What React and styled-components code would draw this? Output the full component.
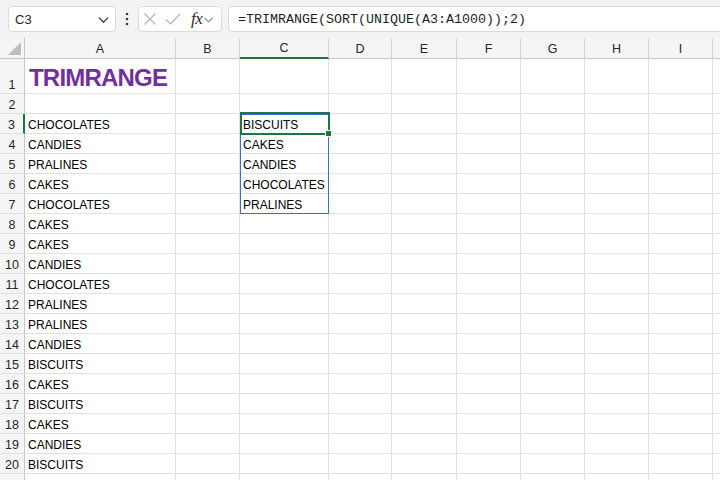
import React from "react";
import styled, { createGlobalStyle, css } from "styled-components";

const COLS = [
  { key: "A", width: 151 },
  { key: "B", width: 64 },
  { key: "C", width: 89 },
  { key: "D", width: 63 },
  { key: "E", width: 65 },
  { key: "F", width: 64 },
  { key: "G", width: 64 },
  { key: "H", width: 64 },
  { key: "I", width: 64 },
  { key: "", width: 64 },
];

const COL_A = [
  "CHOCOLATES",
  "CANDIES",
  "PRALINES",
  "CAKES",
  "CHOCOLATES",
  "CAKES",
  "CAKES",
  "CANDIES",
  "CHOCOLATES",
  "PRALINES",
  "PRALINES",
  "CANDIES",
  "BISCUITS",
  "CAKES",
  "BISCUITS",
  "CAKES",
  "CANDIES",
  "BISCUITS",
];

const COL_C = ["BISCUITS", "CAKES", "CANDIES", "CHOCOLATES", "PRALINES"];

// row 21 only peeks in at the bottom edge
const ROW_COUNT = 21;

const cellValue = (row, col) => {
  if (col === "A" && row >= 3 && row <= 20) return COL_A[row - 3];
  if (col === "C" && row >= 3 && row <= 7) return COL_C[row - 3];
  return "";
};

const GlobalStyle = createGlobalStyle`
  html, body {
    margin: 0;
    padding: 0;
    background: #ffffff;
  }
  body {
    font-family: "Liberation Sans", Arial, sans-serif;
  }
`;

const Page = styled.div`
  width: 720px;
  height: 480px;
  overflow: hidden;
  display: flex;
  flex-direction: column;
  background: #ffffff;
`;

const FormulaBar = styled.div`
  height: 38px;
  flex: none;
  display: flex;
  align-items: flex-start;
  padding: 6px 0 0 8px;
  box-sizing: border-box;
  background: #f3f3f3;
`;

const BarBox = styled.div`
  height: 26px;
  box-sizing: border-box;
  background: #ffffff;
  border: 1px solid #dadada;
  border-radius: 4px;
  display: flex;
  align-items: center;
`;

const NameBox = styled(BarBox)`
  width: 108px;
  justify-content: space-between;
  padding: 0 5px 0 6px;
  font-size: 13px;
  color: #1f1f1f;
`;

const Kebab = styled.div`
  width: 22px;
  height: 26px;
  display: flex;
  align-items: center;
  justify-content: center;
`;

const FxGroup = styled(BarBox)`
  width: 84px;
  padding: 0 3px 0 4px;
  gap: 8px;
`;

const FxWrap = styled.span`
  display: flex;
  align-items: center;
  gap: 1px;
`;

const FxLabel = styled.span`
  font-family: "Liberation Serif", "Times New Roman", serif;
  font-style: italic;
  font-size: 17px;
  color: #2b2b2b;
  margin-left: 2px;
  letter-spacing: -0.5px;
`;

const FormulaInput = styled(BarBox)`
  flex: 1;
  margin-left: 6px;
  margin-right: -12px;
  padding-left: 9px;
  font-family: "Liberation Mono", "Courier New", monospace;
  font-size: 13.33px;
  color: #1f1f1f;
`;

const Sheet = styled.div`
  flex: 1;
  display: grid;
  grid-template-columns: 25px ${COLS.map((c) => `${c.width}px`).join(" ")};
  grid-template-rows: 21px 35px repeat(${ROW_COUNT - 1}, 20px);
  font-size: 12px;
`;

const placed = css`
  grid-row: ${(p) => p.$r};
  grid-column: ${(p) => p.$c};
`;

const Corner = styled.div`
  ${placed}
  background: #f5f5f5;
  border-right: 1px solid #c8c8c8;
  border-bottom: 1px solid #c8c8c8;
  box-sizing: border-box;
  display: flex;
  align-items: flex-end;
  justify-content: flex-end;
  padding: 0 3px 3px 0;
`;

const ColHeader = styled.div`
  ${placed}
  background: #f5f5f5;
  box-sizing: border-box;
  border-right: 1px solid #d4d4d4;
  border-bottom: 1px solid #c8c8c8;
  display: flex;
  align-items: center;
  justify-content: center;
  padding-top: 1px;
  font-size: 12.5px;
  color: #262626;
  ${(p) =>
    p.$active &&
    css`
      border-bottom: 2px solid #217346;
    `}
`;

const RowHeader = styled.div`
  ${placed}
  background: #f5f5f5;
  box-sizing: border-box;
  border-right: 1px solid #c8c8c8;
  border-bottom: 1px solid #e1e1e1;
  display: flex;
  align-items: flex-end;
  justify-content: center;
  line-height: 16px;
  font-size: 12.5px;
  color: #262626;
  ${(p) =>
    p.$active &&
    css`
      border-right: 2px solid #217346;
    `}
`;

const Cell = styled.div`
  ${placed}
  box-sizing: border-box;
  border-right: 1px solid #e1e1e1;
  border-bottom: 1px solid #e1e1e1;
  display: flex;
  align-items: flex-end;
  padding: 0 0 0 3px;
  line-height: 16px;
  white-space: nowrap;
  color: #000000;
  ${(p) =>
    p.$title &&
    css`
      font-size: 24px;
      font-weight: bold;
      color: #7030a0;
      line-height: 28px;
      padding: 0 0 1px 4px;
      letter-spacing: -0.8px;
    `}
`;

const SpillRange = styled.div`
  grid-column: 4;
  grid-row: 4 / span 5;
  border: 1px solid #3a6fd0;
  pointer-events: none;
`;

const Selection = styled.div`
  grid-column: 4;
  grid-row: 4;
  margin: -2px -1px -1px 0;
  border: 2px solid #217346;
  position: relative;
  pointer-events: none;
`;

const FillHandle = styled.span`
  position: absolute;
  right: -4px;
  bottom: -4px;
  width: 5px;
  height: 5px;
  background: #217346;
  border: 1px solid #ffffff;
`;

const Chevron = ({ size = 12, color = "#3a3a3a" }) => (
  <svg width={size} height={size} viewBox="0 0 12 12">
    <path
      d="M2 4.5 L6 8.5 L10 4.5"
      fill="none"
      stroke={color}
      strokeWidth="1.2"
      strokeLinecap="round"
      strokeLinejoin="round"
    />
  </svg>
);

const App = () => {
  const cells = [];
  for (let r = 1; r <= ROW_COUNT; r += 1) {
    const gr = r + 1;
    cells.push(
      <RowHeader key={`rh${r}`} $r={gr} $c={1} $active={r === 3}>
        {r < ROW_COUNT ? r : ""}
      </RowHeader>
    );
    COLS.forEach((c, i) => {
      const title = r === 1 && c.key === "A";
      cells.push(
        <Cell key={`${c.key || "J"}${r}`} $r={gr} $c={i + 2} $title={title}>
          {title ? "TRIMRANGE" : cellValue(r, c.key)}
        </Cell>
      );
    });
  }

  return (
    <Page>
      <GlobalStyle />
      <FormulaBar>
        <NameBox>
          <span>C3</span>
          <Chevron size={13} />
        </NameBox>
        <Kebab>
          <svg width="4" height="14" viewBox="0 0 4 14">
            <circle cx="2" cy="2" r="1.3" fill="#3a3a3a" />
            <circle cx="2" cy="7" r="1.3" fill="#3a3a3a" />
            <circle cx="2" cy="12" r="1.3" fill="#3a3a3a" />
          </svg>
        </Kebab>
        <FxGroup>
          <svg width="14" height="14" viewBox="0 0 14 14">
            <path
              d="M1.5 1.5 L12.5 12.5 M12.5 1.5 L1.5 12.5"
              stroke="#b4b4b4"
              strokeWidth="1.2"
              fill="none"
            />
          </svg>
          <svg width="16" height="14" viewBox="0 0 16 14">
            <path
              d="M1 7.5 L5.5 12 L15 2"
              stroke="#b4b4b4"
              strokeWidth="1.2"
              fill="none"
            />
          </svg>
          <FxWrap>
            <FxLabel>fx</FxLabel>
            <Chevron size={11} color="#8a8a8a" />
          </FxWrap>
        </FxGroup>
        <FormulaInput>=TRIMRANGE(SORT(UNIQUE(A3:A1000));2)</FormulaInput>
      </FormulaBar>
      <Sheet>
        <Corner $r={1} $c={1}>
          <svg width="13" height="13" viewBox="0 0 13 13">
            <path d="M13 0 L13 13 L0 13 Z" fill="#bdbdbd" />
          </svg>
        </Corner>
        {COLS.map((c, i) => (
          <ColHeader key={`h${i}`} $r={1} $c={i + 2} $active={c.key === "C"}>
            {c.key}
          </ColHeader>
        ))}
        {cells}
        <SpillRange />
        <Selection>
          <FillHandle />
        </Selection>
      </Sheet>
    </Page>
  );
};

export default App;
